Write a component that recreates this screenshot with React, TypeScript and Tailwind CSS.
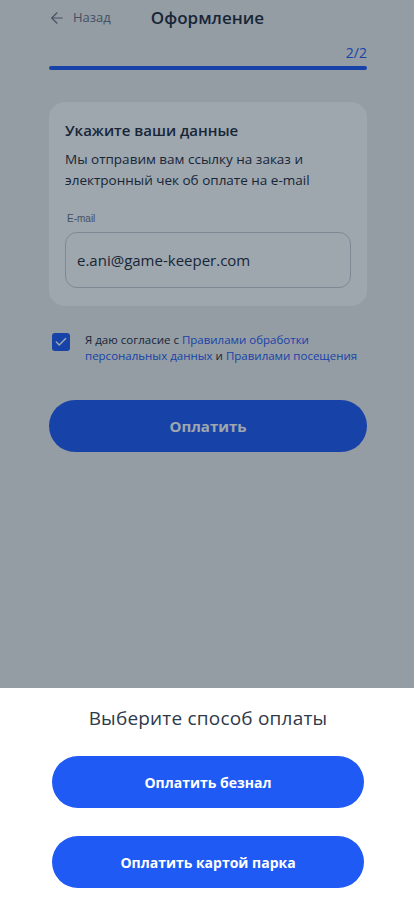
import React from 'react';
import { ArrowLeft, Check } from 'lucide-react';

const font = { fontFamily: '"Open Sans", "Noto Sans", sans-serif' };

const App: React.FC = () => {
  return (
    <div className="relative h-[908px] w-full overflow-hidden bg-[#eeeeee]" style={font}>
      <div className="pl-[49px] pr-[47px]">
        {/* Header */}
        <div className="flex h-[36px] items-center">
          <button className="flex items-center text-[#6b7280]">
            <ArrowLeft size={18} strokeWidth={1.5} className="-ml-[1px]" />
            <span className="ml-[7px] text-[13px]">Назад</span>
          </button>
          <h1 className="ml-[40px] text-[17px] font-semibold text-[#1e2a3a]">Оформление</h1>
        </div>

        {/* Progress */}
        <div className="mt-[7px] flex justify-end text-[14px] leading-[20px] text-[#1f5af5]">2/2</div>
        <div className="mt-[3px] h-[4px] w-full rounded-full bg-[#1f5af5]" />

        {/* Card */}
        <div className="mt-[32px] rounded-[16px] bg-white px-[16px] pb-[18px] pt-[18px]">
          <h2 className="text-[15px] font-semibold leading-[20px] text-[#1e2a3a]">Укажите ваши данные</h2>
          <p className="mt-[9px] text-[13.5px] leading-[21px] text-[#1e2a3a]">
            Мы отправим вам ссылку на заказ и электронный чек об оплате на e-mail
          </p>
          <label
            className="mt-[20px] block pl-[2px] text-[10px] text-[#6b7280]"
            style={{ fontFamily: '"Liberation Sans", Arial, sans-serif' }}
          >
            E-mail
          </label>
          <div className="mt-[6px] flex h-[56px] items-center rounded-[12px] border border-[#c9ced6] px-[11px] text-[15px] text-[#1e2a3a]">
            e.ani@game-keeper.com
          </div>
        </div>

        {/* Consent */}
        <div className="mt-[26px] flex items-start">
          <div className="ml-[3px] mt-[1px] flex h-[18px] w-[18px] shrink-0 items-center justify-center rounded-[3px] bg-[#1f5af5]">
            <Check size={14} strokeWidth={2.5} className="text-white" />
          </div>
          <div className="ml-[15px] text-[11.5px] leading-[16px] text-[#1e2a3a]">
            <div>
              Я даю согласие с <span className="text-[#1f5af5]">Правилами обработки</span>
            </div>
            <div>
              <span className="text-[#1f5af5]">персональных данных</span> и{' '}
              <span className="text-[#1f5af5]">Правилами посещения</span>
            </div>
          </div>
        </div>

        <button className="mt-[36px] h-[52px] w-full rounded-full bg-[#1f5af5] text-[15px] font-bold text-white">
          Оплатить
        </button>
      </div>

      {/* Dim overlay */}
      <div className="absolute inset-0 bg-[rgba(13,33,53,0.4)]" />

      {/* Bottom sheet */}
      <div className="absolute bottom-0 left-0 right-0 h-[220px] bg-white pl-[52px] pr-[50px] pt-[18px]">
        <h3 className="text-center text-[19px] font-medium leading-[24px] tracking-[0.2px] text-[#2d3a4a]">
          Выберите способ оплаты
        </h3>
        <div className="mt-[26px] flex flex-col gap-[28px]">
          <button className="h-[52px] w-full rounded-full bg-[#1f5af5] text-[14px] font-bold text-white">
            Оплатить безнал
          </button>
          <button className="h-[52px] w-full rounded-full bg-[#1f5af5] text-[14px] font-bold text-white">
            Оплатить картой парка
          </button>
        </div>
      </div>
    </div>
  );
};

export default App;
